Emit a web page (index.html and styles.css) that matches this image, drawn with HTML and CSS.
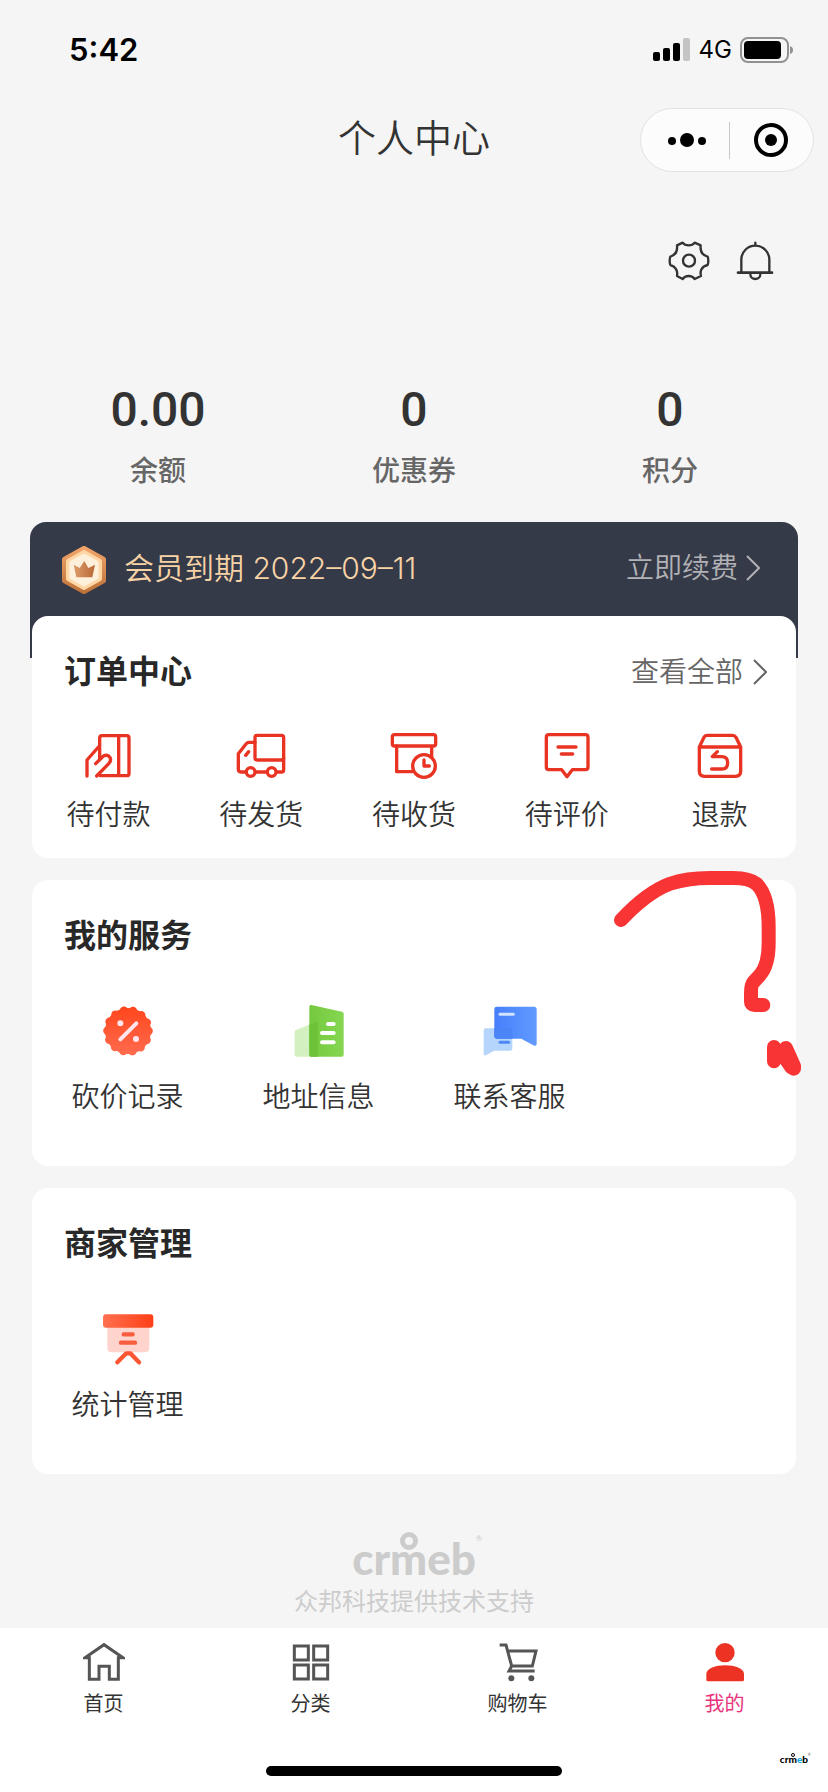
FILE: index.html
```html
<!DOCTYPE html>
<html lang="zh-CN">
<head>
<meta charset="utf-8">
<meta name="viewport" content="width=device-width, initial-scale=1">
<title>个人中心</title>
<link rel="stylesheet" href="styles.css">
</head>
<body>
<div class="page">
  <div class="status">
    <span class="time">5:42</span>
    <div class="status-right">
      <svg width="38" height="24" viewBox="0 0 38 24"><rect x="0" y="14" width="7" height="9" rx="2"/><rect x="10" y="10" width="7" height="13" rx="2"/><rect x="20" y="5" width="7" height="18" rx="2"/><rect x="30" y="0" width="7" height="23" rx="2" fill="#c4c4c4"/></svg>
      <span class="network">4G</span>
      <svg width="54" height="26" viewBox="0 0 54 26"><rect x="1" y="1" width="47" height="24" rx="7" fill="none" stroke="#929292" stroke-width="2"/><rect x="4" y="4" width="37" height="18" rx="4"/><path d="M50 9Q53 10 53 13T50 17Z" fill="#929292"/></svg>
    </div>
  </div>

  <header class="navbar">
    <h1 class="nav-title">个人中心</h1>
    <div class="capsule">
      <button class="capsule-btn" aria-label="更多"><svg width="38" height="14" viewBox="0 0 38 14"><circle cx="4" cy="8" r="4"/><circle cx="19" cy="7" r="7"/><circle cx="34" cy="8" r="4"/></svg></button>
      <span class="capsule-line"></span>
      <button class="capsule-btn" aria-label="关闭"><svg width="34" height="34" viewBox="0 0 34 34"><circle cx="17" cy="17" r="15" fill="none" stroke="#000" stroke-width="4"/><circle cx="17" cy="17" r="6"/></svg></button>
    </div>
  </header>

  <div class="tools">
    <button class="tool" aria-label="设置"><svg width="42" height="40" viewBox="111 455 126 120"><path d="M155 460C163 471 183 471 191 460L209 468C207 485 212 497 230 502Q234 514 230 527C212 531 206 545 210 560L191 569C183 557 163 557 155 569L138 560C141 545 134 531 118 527Q114 514 118 502C134 497 140 485 138 468Z"/><circle cx="174" cy="514" r="18"/></svg></button>
    <button class="tool" aria-label="消息"><svg width="38" height="40" viewBox="315 455 114 120"><path d="M331 549V511A42 42 0 0 1 415 511V549M373 460V468M358 555A15 14 0 0 0 388 555"/><path d="M321 550H423" stroke-width="8"/></svg></button>
  </div>

  <div class="stats">
    <a class="stat" href="#"><span class="stat-num">0.00</span><span class="stat-label">余额</span></a>
    <a class="stat" href="#"><span class="stat-num">0</span><span class="stat-label">优惠券</span></a>
    <a class="stat" href="#"><span class="stat-num">0</span><span class="stat-label">积分</span></a>
  </div>

  <main class="main">
    <section class="vip">
      <svg width="44" height="48" viewBox="0 0 132 144">
        <defs>
          <linearGradient id="medal" x1="0" y1="0" x2="0" y2="1"><stop offset="0" stop-color="#f0a468"/><stop offset="1" stop-color="#bd733b"/></linearGradient>
          <linearGradient id="crown" x1="0" y1="0" x2="1" y2="0"><stop offset="0" stop-color="#dd9c6b"/><stop offset="1" stop-color="#b96937"/></linearGradient>
        </defs>
        <path d="M66 8L124 40V104L66 136L8 104V40Z" fill="url(#medal)" stroke="url(#medal)" stroke-width="16" stroke-linejoin="round"/>
        <path d="M66 18L114 45V99L66 126L18 99V45Z" fill="#ffd7a5" stroke="#ffd7a5" stroke-width="12" stroke-linejoin="round"/>
        <path d="M66 29L104 50V94L66 115L28 94V50Z" fill="#fff0dc" stroke="#fff0dc" stroke-width="12" stroke-linejoin="round"/>
        <path d="M35 56L53 66L67 45L79 66L99 56L91 94H43Z" fill="url(#crown)"/>
      </svg>
      <span class="vip-text">会员到期 2022–09–11</span>
      <a class="vip-link" href="#">立即续费<svg class="chevron" width="14" height="26" viewBox="0 0 14 26"><path d="M1 1L13 13L1 25"/></svg></a>
    </section>

    <section class="card orders">
      <div class="card-head">
        <h2 class="card-title">订单中心</h2>
        <a class="more" href="#">查看全部<svg class="chevron" width="14" height="26" viewBox="0 0 14 26"><path d="M1 1L13 13L1 25"/></svg></a>
      </div>
      <div class="order-grid">
        <a class="order" href="#"><svg class="line-icon" viewBox="98 65 150 150"><path d="M148 150V86Q148 79 155 79H229Q236 79 236 86V193Q236 199 229 199H150M205 80V198M110 200V152L147 110M139 200L176 162Q186 149 175 140Q165 134 156 143L136 163"/></svg>待付款</a>
        <a class="order" href="#"><svg class="line-icon" viewBox="558 65 150 150"><rect x="615" y="78" width="86" height="74" rx="7"/><path d="M701 145V181Q701 188 694 188H680M650 188H617M587 188H573Q565 188 565 180V133L588 104Q592 99 597 99H615M587 138L596 127"/><circle cx="602" cy="188" r="13"/><circle cx="665" cy="188" r="13"/></svg>待发货</a>
        <a class="order" href="#"><svg class="line-icon" viewBox="1014 65 150 150"><rect x="1024" y="76" width="130" height="34" rx="7"/><path d="M1037 110V187H1083M1142 112V142M1119 152V170H1135"/><circle cx="1119" cy="170" r="34"/></svg>待收货</a>
        <a class="order" href="#"><svg class="line-icon" viewBox="333 65 150 150"><path d="M354 76H463Q471 76 471 84V173Q471 181 463 181H424L408 202L392 181H354Q346 181 346 173V84Q346 76 354 76ZM381 113H435M391 134H425"/></svg>待评价</a>
        <a class="order" href="#"><svg class="line-icon" viewBox="792 65 150 150"><path d="M805 113V186Q805 201 820 201H914Q929 201 929 186V113L915 84Q911 78 905 78H829Q822 78 819 84ZH929M859 127L844 142H872Q890 142 890 160Q890 179 872 179H842"/></svg>退款</a>
      </div>
    </section>

    <section class="card service-card">
      <h2 class="card-title">我的服务</h2>
      <div class="service-grid">
        <a class="service" href="#"><svg class="service-icon" viewBox="119 66 168 168">
          <defs><linearGradient id="badge" gradientUnits="userSpaceOnUse" x1="203" y1="75" x2="203" y2="225"><stop offset="0" stop-color="#ff451c"/><stop offset="1" stop-color="#ff6c4f"/></linearGradient></defs>
          <circle cx="203" cy="150" r="69" fill="url(#badge)"/><circle cx="203" cy="150" r="62" fill="none" stroke="url(#badge)" stroke-width="25" stroke-linecap="round" pathLength="28" stroke-dasharray="0 2"/>
          <circle cx="180" cy="127" r="9" fill="#ffe6ee"/><circle cx="227" cy="174" r="9" fill="#ffe6ee"/><path d="M180 175L228 127" stroke="#ffe6ee" stroke-width="12" stroke-linecap="round"/></svg>砍价记录</a>
        <a class="service" href="#"><svg class="service-icon" viewBox="694 69 168 168">
          <defs><linearGradient id="tower" x1="0" y1="0" x2="1" y2="0"><stop offset="0" stop-color="#74c93e"/><stop offset="1" stop-color="#86d651"/></linearGradient></defs>
          <path d="M709 150Q705 151 705 156V225Q705 230 710 230H774V124Z" fill="#d3f0c1"/>
          <path d="M749 80Q749 74 755 75L847 95Q852 96 852 101V224Q852 230 846 230H755Q749 230 749 224Z" fill="url(#tower)"/>
          <path d="M749 134L774 124V230H755Q749 230 749 224Z" fill="#6cc338"/>
          <path d="M805 132H822M787 159H822M787 187H822" stroke="#fff" stroke-width="12" stroke-linecap="round"/></svg>地址信息</a>
        <a class="service" href="#"><svg class="service-icon" viewBox="1266 67 168 168">
          <defs><linearGradient id="chat" x1="0" y1="0" x2="1" y2="0"><stop offset="0" stop-color="#467ffb"/><stop offset="1" stop-color="#619bff"/></linearGradient></defs>
          <path d="M1278 143H1350Q1357 143 1357 150V204Q1357 210 1350 210H1302L1278 224Q1271 226 1271 219V150Q1271 143 1278 143Z" fill="#b5d5fd"/>
          <path d="M1310 78H1422Q1430 78 1430 86V190Q1430 197 1423 195L1384 174H1310Q1303 174 1303 167V85Q1303 78 1310 78Z" fill="url(#chat)"/>
          <path d="M1303 143H1350Q1357 143 1357 150V174H1310Q1303 174 1303 167Z" fill="#4a84f5"/>
          <path d="M1320 101H1360" stroke="#cfe3ff" stroke-width="9" stroke-linecap="round"/><path d="M1320 185H1346" stroke="#4d88f4" stroke-width="9" stroke-linecap="round"/></svg>联系客服</a>
      </div>
      <svg class="scribble" width="238" height="240" viewBox="0 0 714 720" aria-hidden="true"><path d="M93 210Q170 128 238 102Q290 84 360 84H430Q478 84 500 102Q536 138 536 230V280Q536 345 510 375L490 397Q483 405 483 430V455Q483 465 493 465H520M552 591V634M588 594L612 648V656L604 652L572 605"/></svg>
    </section>

    <section class="card">
      <h2 class="card-title">商家管理</h2>
      <div class="service-grid">
        <a class="service" href="#"><svg class="service-icon" viewBox="149 59 168 168">
          <defs><linearGradient id="board" x1="0" y1="0" x2="1" y2="0"><stop offset="0" stop-color="#ff704f"/><stop offset="1" stop-color="#ff3f17"/></linearGradient></defs>
          <path d="M171 104H297V170Q297 183 284 183H184Q171 183 171 170Z" fill="#ffd4cc"/>
          <rect x="158" y="69" width="151" height="40" rx="9" fill="url(#board)"/>
          <path d="M220 129H247M212 154H254" stroke="#f95d40" stroke-width="13" stroke-linecap="round"/>
          <path d="M201 213L228 186H240L266 213" fill="none" stroke="#fb5534" stroke-width="13" stroke-linecap="round" stroke-linejoin="round"/></svg>统计管理</a>
      </div>
    </section>
  </main>

  <footer class="support">
    <div class="brand">cr<span class="brand-m">m</span>eb<span class="brand-reg">®</span></div>
    <p class="support-text">众邦科技提供技术支持</p>
  </footer>

  <div class="bottom">
    <nav class="tabs">
      <a class="tab" href="#"><svg width="42" height="40" viewBox="249 67 126 120"><path d="M255 114L312 75L369 114H355V179H328V140H297V179H268V114Z"/></svg>首页</a>
      <a class="tab" href="#"><svg width="42" height="40" viewBox="868 67 126 120"><path d="M881 79H923V121H881ZM939 79H981V121H939ZM881 136H923V178H881ZM939 136H981V178H939Z"/></svg>分类</a>
      <a class="tab" href="#"><svg width="42" height="40" viewBox="229 67 126 120"><path d="M237 76H256L273 139H335L346 94H262M273 139L265 154H342"/><circle cx="272" cy="176" r="9" fill="#555" stroke="none"/><circle cx="332" cy="176" r="9" fill="#555" stroke="none"/></svg>购物车</a>
      <a class="tab tab-active" href="#" aria-current="page"><svg width="42" height="40" viewBox="850 67 126 120"><g fill="#ec3323" stroke="none"><circle cx="913" cy="99" r="29"/><path d="M857 180V163C857 128 970 128 970 163V180Q970 185 965 185H862Q857 185 857 180Z"/></g></svg>我的</a>
    </nav>
    <div class="home-bar"></div>
    <div class="brand brand-small">cr<span class="brand-m">m</span><span class="brand-e">e</span>b<span class="brand-reg">®</span></div>
  </div>
</div>
</body>
</html>
```

FILE: styles.css
```css
*, *::before { box-sizing: border-box; }
body {
  margin: 0;
  background: #f5f5f5;
  color: #333;
  font-family: Inter, "Noto Sans CJK SC", sans-serif;
  font-size: 28px;
  line-height: 40px;
}
a { color: inherit; text-decoration: none; }
button { padding: 0; border: 0; background: none; font: inherit; }
h1, h2, p { margin: 0; }
svg { display: block; flex: none; }

.page { min-height: 100vh; display: flex; flex-direction: column; }

.status {
  height: 100px;
  padding: 0 34px 0 69px;
  display: flex;
  align-items: center;
  justify-content: space-between;
  color: #000;
}
.time { font-size: 31px; font-weight: 600; }
.status-right { display: flex; align-items: center; gap: 8px; }
.network { font-size: 24px; font-weight: 400; }

.navbar {
  height: 80px;
  padding-right: 14px;
  display: grid;
  grid-template-columns: 1fr auto 1fr;
  align-items: center;
}
.nav-title { grid-column: 2; font-size: 38px; line-height: 52px; font-weight: 350; padding: 0 0 4px 14px; }
.capsule {
  justify-self: end;
  width: 174px;
  height: 64px;
  border: 1px solid #e2e2e2;
  border-radius: 32px;
  background: #fcfcfc;
  display: flex;
  align-items: center;
}
.capsule-btn { flex: 1; height: 100%; display: flex; align-items: center; justify-content: center; }
.capsule-btn:first-child { padding-left: 4px; }
.capsule-line { width: 1px; height: 37px; background: #c8c8c8; }

.tools { display: flex; justify-content: flex-end; gap: 26px; padding: 61px 54px 0 0; }
.tool svg { fill: none; stroke: #333; stroke-width: 7; stroke-linecap: round; stroke-linejoin: round; }

.stats { display: grid; grid-template-columns: repeat(3, 1fr); padding: 101px 30px 31px; }
.stat { display: flex; flex-direction: column; align-items: center; gap: 13px; }
.stat-num { font-family: Roboto, sans-serif; font-size: 48px; line-height: 56px; font-weight: 500; }
.stat-label { color: #666; font-weight: 500; }

.main { padding: 0 32px; display: flex; flex-direction: column; gap: 22px; }
.vip {
  margin: 0 -2px -64px;
  height: 136px;
  padding: 24px 38px 0 32px;
  border-radius: 16px 16px 0 0;
  background: #353a49;
  display: flex;
  align-items: flex-start;
}
.vip-text { margin-left: 18px; line-height: 44px; font-size: 30px; font-weight: 350; color: #f8d3a5; }
.vip-link { margin-left: auto; line-height: 44px; color: #b2b2b5; font-weight: 350; display: flex; align-items: center; gap: 8px; }
.chevron { fill: none; stroke: currentColor; stroke-width: 2; }

.card { position: relative; min-height: 286px; padding: 32px 0 49px; border-radius: 16px; background: #fff; }
.card-title { padding-left: 32px; font-size: 32px; line-height: 48px; font-weight: 700; color: #282828; }
.orders { min-height: 0; padding: 32px 0 23px; }
.card-head { display: flex; align-items: center; justify-content: space-between; padding-right: 29px; }
.more { display: flex; align-items: center; gap: 10px; color: #666; font-weight: 350; }
.order-grid { display: grid; grid-template-columns: repeat(5, 1fr); margin-top: 35px; }
.order { display: flex; flex-direction: column; align-items: center; gap: 14px; font-weight: 350; }
.line-icon { width: 50px; height: 50px; fill: none; stroke: #e93323; stroke-width: 10; stroke-linecap: round; stroke-linejoin: round; }
.service-grid { display: grid; grid-template-columns: repeat(4, 1fr); margin-top: 43px; }
.service { display: flex; flex-direction: column; align-items: center; gap: 18px; font-weight: 350; }
.service-icon { width: 56px; height: 56px; }
.scribble {
  position: absolute;
  top: -30px;
  right: -32px;
  pointer-events: none;
  fill: none;
  stroke: #f83434;
  stroke-width: 42;
  stroke-linecap: round;
  stroke-linejoin: round;
}

.support { padding-top: 56px; display: flex; flex-direction: column; align-items: center; color: #ccc; }
.brand { position: relative; font-family: Lato, sans-serif; font-weight: 900; font-size: 44px; line-height: 56px; }
.brand-m { position: relative; }
.brand-m::before {
  content: "";
  position: absolute;
  left: 50%;
  top: 0;
  width: 18px;
  height: 18px;
  margin-left: -9px;
  border: 5px solid currentColor;
  border-radius: 50%;
}
.brand-reg { position: absolute; left: 100%; top: 0; font-size: 8px; line-height: 16px; font-weight: 400; }
.support-text { font-size: 24px; line-height: 32px; }

.bottom { position: relative; margin-top: auto; height: 164px; background: #fff; display: flex; flex-direction: column; align-items: center; }
.tabs { width: 100%; display: grid; grid-template-columns: repeat(4, 1fr); padding-top: 14px; }
.tab { display: flex; flex-direction: column; align-items: center; gap: 8px; font-size: 20px; line-height: 28px; }
.tab svg { fill: none; stroke: #555; stroke-width: 9; }
.tab-active { color: #e9337c; }
.home-bar { width: 296px; height: 10px; margin-top: auto; margin-bottom: 16px; border-radius: 5px; background: #000; }
.brand-small { position: absolute; right: 20px; bottom: 27px; font-size: 10px; line-height: 12px; color: #000; }
.brand-small .brand-m::before { top: 0; width: 4px; height: 4px; margin-left: -2px; border-width: 1px; }
.brand-small .brand-reg { font-size: 3px; line-height: 4px; }
.brand-e { color: #15a3e6; }
```
